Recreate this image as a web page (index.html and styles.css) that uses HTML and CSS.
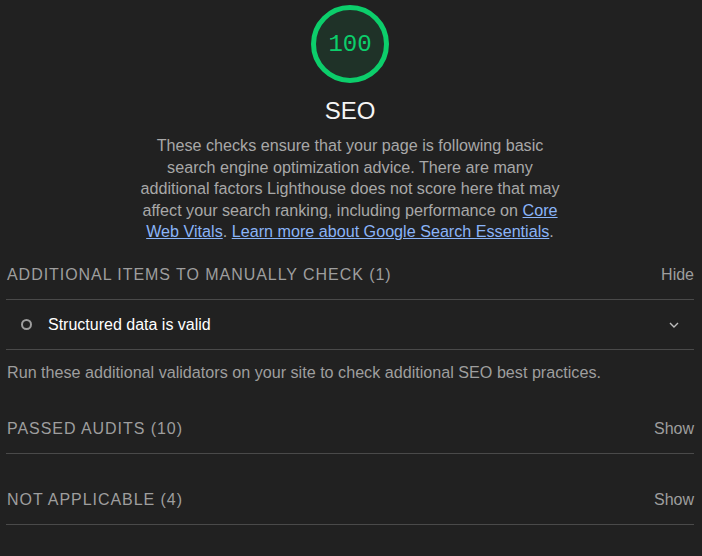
FILE: index.html
```html
<!DOCTYPE html>
<html lang="en">
<head>
<meta charset="utf-8">
<title>SEO</title>
<link rel="stylesheet" href="styles.css">
</head>
<body>
<div class="category">
  <div class="category-header">
    <div class="gauge">
      <svg class="gauge-svg" viewBox="0 0 78 78" width="78" height="78">
        <circle cx="39" cy="39" r="36.5" class="gauge-arc"></circle>
      </svg>
      <span class="gauge-score">100</span>
    </div>
    <h2 class="category-title">SEO</h2>
    <p class="category-desc">These checks ensure that your page is following basic search engine optimization advice. There are many additional factors Lighthouse does not score here that may affect your search ranking, including performance on <a href="#">Core Web Vitals</a>. <a href="#">Learn more about Google Search Essentials</a>.</p>
  </div>

  <div class="group">
    <div class="group-header">
      <span class="group-title">Additional items to manually check (1)</span>
      <span class="group-toggle">Hide</span>
    </div>
    <div class="audit">
      <span class="audit-icon"></span>
      <span class="audit-title">Structured data is valid</span>
      <svg class="audit-chevron" viewBox="0 0 10 6" width="10" height="6">
        <path d="M1 1 L5 5 L9 1" fill="none" stroke="#bdbdbd" stroke-width="1.4"></path>
      </svg>
    </div>
    <p class="group-desc">Run these additional validators on your site to check additional SEO best practices.</p>
  </div>

  <div class="group group-spaced">
    <div class="group-header">
      <span class="group-title">Passed audits (10)</span>
      <span class="group-toggle">Show</span>
    </div>
  </div>

  <div class="group group-spaced">
    <div class="group-header">
      <span class="group-title">Not applicable (4)</span>
      <span class="group-toggle">Show</span>
    </div>
  </div>
</div>
</body>
</html>
```
FILE: styles.css
```css
html, body {
  margin: 0;
  padding: 0;
  background: #212121;
}

body {
  font-family: "Liberation Sans", Arial, sans-serif;
  font-size: 16px;
  color: #f5f5f5;
}

.category {
  padding: 5px 8px 0 6px;
}

.category-header {
  display: flex;
  flex-direction: column;
  align-items: center;
}

.gauge {
  position: relative;
  width: 78px;
  height: 78px;
}

.gauge-svg {
  display: block;
}

.gauge-arc {
  fill: #1f3228;
  stroke: #0cce6b;
  stroke-width: 5;
}

.gauge-score {
  position: absolute;
  inset: 0;
  display: flex;
  align-items: center;
  justify-content: center;
  padding-top: 1px;
  font-family: "Liberation Mono", "DejaVu Sans Mono", monospace;
  font-size: 24px;
  color: #0cce6b;
}

.category-title {
  margin: 14px 0 0;
  font-size: 24px;
  line-height: 28px;
  font-weight: normal;
  color: #f5f5f5;
}

.category-desc {
  margin: 10px 0 0;
  width: 428px;
  text-align: center;
  line-height: 21.5px;
  font-size: 16.15px;
  color: #a8a8a8;
}

.category-desc a {
  color: #8ab4f8;
}

.group {
  margin-top: 7px;
}

.group-spaced {
  margin-top: 21px;
}

.group-header {
  box-sizing: border-box;
  display: flex;
  justify-content: space-between;
  align-items: center;
  height: 50px;
  padding: 2px 0 0 1px;
  border-bottom: 1px solid #4a4a4a;
}

.group-title {
  text-transform: uppercase;
  letter-spacing: 0.95px;
  color: #9e9e9e;
}

.group-toggle {
  color: #9e9e9e;
}

.audit {
  box-sizing: border-box;
  display: flex;
  align-items: center;
  height: 50px;
  padding: 1px 15px 0 15px;
  border-bottom: 1px solid #4a4a4a;
}

.audit-icon {
  width: 7px;
  height: 7px;
  border: 2px solid #9e9e9e;
  border-radius: 50%;
}

.audit-title {
  margin-left: 16px;
  flex: 1;
  color: #ffffff;
}

.audit-chevron {
  display: block;
}

.group-desc {
  margin: 12px 0 0 1px;
  padding-bottom: 1px;
  line-height: 20px;
  font-size: 16.15px;
  color: #9e9e9e;
}
```
